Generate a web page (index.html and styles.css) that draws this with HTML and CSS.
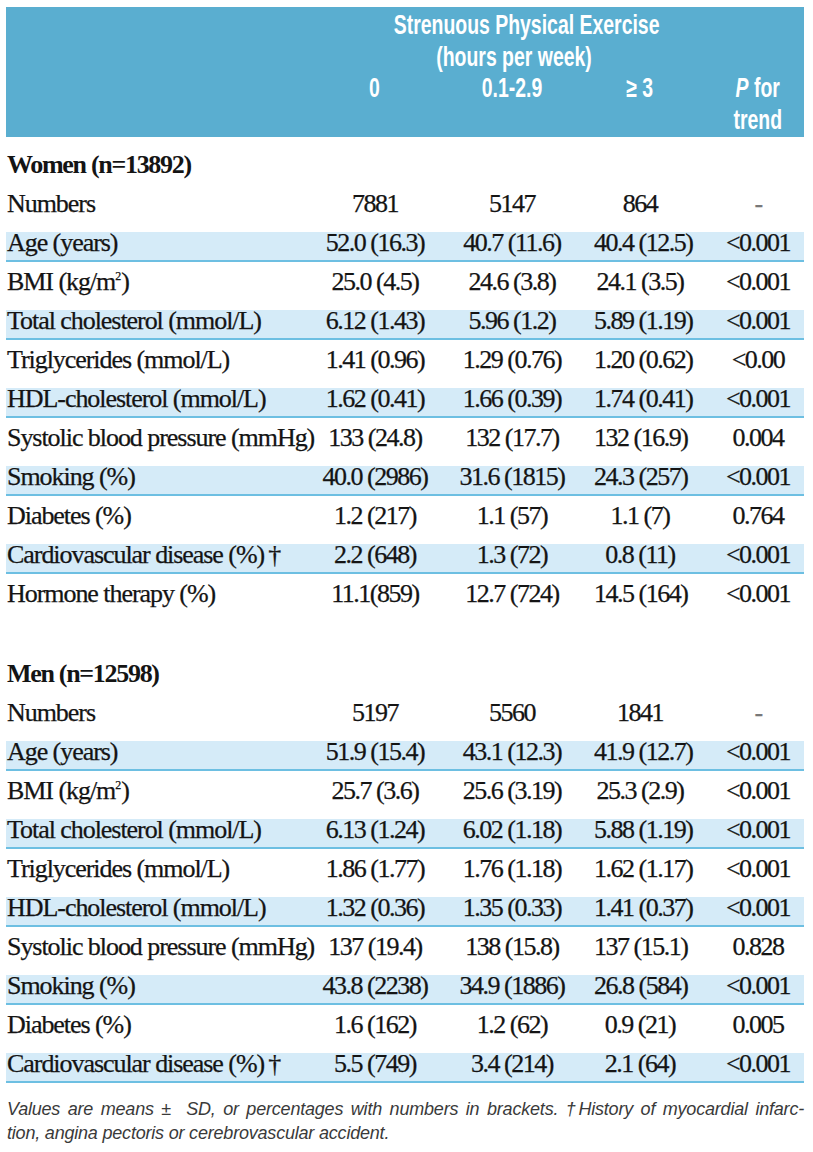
FILE: index.html
```html
<!DOCTYPE html>
<html lang="en">
<head>
<meta charset="utf-8">
<title>Strenuous Physical Exercise</title>
<link rel="stylesheet" href="styles.css">
</head>
<body>
<div class="page">
  <div class="head">
    <div class="cols hrow"><div class="span"><span class="sx">Strenuous Physical Exercise</span></div></div>
    <div class="cols hrow"><div class="span"><span class="sx">(hours per week)</span></div></div>
    <div class="cols hrow">
      <div></div>
      <div class="hc"><span class="sx">0</span></div>
      <div class="hc"><span class="sx">0.1-2.9</span></div>
      <div class="hc"><span class="sx">&ge; 3</span></div>
      <div class="hc last"><span class="sx"><i>P</i> for<br>trend</span></div>
    </div>
  </div>

  <div class="cols row group first"><div class="lbl">Women (n=13892)</div></div>
  <div class="cols row"><div class="lbl">Numbers</div><div class="v">7881</div><div class="v">5147</div><div class="v">864</div><div class="v last dash">-</div></div>
  <div class="cols row shade"><div class="lbl">Age (years)</div><div class="v">52.0 (16.3)</div><div class="v">40.7 (11.6)</div><div class="v">40.4 (12.5)</div><div class="v last">&lt;0.001</div></div>
  <div class="cols row"><div class="lbl">BMI (kg/m<sup class="sq">2</sup>)</div><div class="v">25.0 (4.5)</div><div class="v">24.6 (3.8)</div><div class="v">24.1 (3.5)</div><div class="v last">&lt;0.001</div></div>
  <div class="cols row shade"><div class="lbl">Total cholesterol (mmol/L)</div><div class="v">6.12 (1.43)</div><div class="v">5.96 (1.2)</div><div class="v">5.89 (1.19)</div><div class="v last">&lt;0.001</div></div>
  <div class="cols row"><div class="lbl">Triglycerides (mmol/L)</div><div class="v">1.41 (0.96)</div><div class="v">1.29 (0.76)</div><div class="v">1.20 (0.62)</div><div class="v last">&lt;0.00</div></div>
  <div class="cols row shade"><div class="lbl">HDL-cholesterol (mmol/L)</div><div class="v">1.62 (0.41)</div><div class="v">1.66 (0.39)</div><div class="v">1.74 (0.41)</div><div class="v last">&lt;0.001</div></div>
  <div class="cols row"><div class="lbl">Systolic blood pressure (mmHg)</div><div class="v">133 (24.8)</div><div class="v">132 (17.7)</div><div class="v">132 (16.9)</div><div class="v last">0.004</div></div>
  <div class="cols row shade"><div class="lbl">Smoking (%)</div><div class="v">40.0 (2986)</div><div class="v">31.6 (1815)</div><div class="v">24.3 (257)</div><div class="v last">&lt;0.001</div></div>
  <div class="cols row"><div class="lbl">Diabetes (%)</div><div class="v">1.2 (217)</div><div class="v">1.1 (57)</div><div class="v">1.1 (7)</div><div class="v last">0.764</div></div>
  <div class="cols row shade"><div class="lbl">Cardiovascular disease (%)&thinsp;&dagger;</div><div class="v">2.2 (648)</div><div class="v">1.3 (72)</div><div class="v">0.8 (11)</div><div class="v last">&lt;0.001</div></div>
  <div class="cols row"><div class="lbl">Hormone therapy (%)</div><div class="v">11.1(859)</div><div class="v">12.7 (724)</div><div class="v">14.5 (164)</div><div class="v last">&lt;0.001</div></div>

  <div class="cols row group section"><div class="lbl">Men (n=12598)</div></div>
  <div class="cols row"><div class="lbl">Numbers</div><div class="v">5197</div><div class="v">5560</div><div class="v">1841</div><div class="v last dash">-</div></div>
  <div class="cols row shade"><div class="lbl">Age (years)</div><div class="v">51.9 (15.4)</div><div class="v">43.1 (12.3)</div><div class="v">41.9 (12.7)</div><div class="v last">&lt;0.001</div></div>
  <div class="cols row"><div class="lbl">BMI (kg/m<sup class="sq">2</sup>)</div><div class="v">25.7 (3.6)</div><div class="v">25.6 (3.19)</div><div class="v">25.3 (2.9)</div><div class="v last">&lt;0.001</div></div>
  <div class="cols row shade"><div class="lbl">Total cholesterol (mmol/L)</div><div class="v">6.13 (1.24)</div><div class="v">6.02 (1.18)</div><div class="v">5.88 (1.19)</div><div class="v last">&lt;0.001</div></div>
  <div class="cols row"><div class="lbl">Triglycerides (mmol/L)</div><div class="v">1.86 (1.77)</div><div class="v">1.76 (1.18)</div><div class="v">1.62 (1.17)</div><div class="v last">&lt;0.001</div></div>
  <div class="cols row shade"><div class="lbl">HDL-cholesterol (mmol/L)</div><div class="v">1.32 (0.36)</div><div class="v">1.35 (0.33)</div><div class="v">1.41 (0.37)</div><div class="v last">&lt;0.001</div></div>
  <div class="cols row"><div class="lbl">Systolic blood pressure (mmHg)</div><div class="v">137 (19.4)</div><div class="v">138 (15.8)</div><div class="v">137 (15.1)</div><div class="v last">0.828</div></div>
  <div class="cols row shade"><div class="lbl">Smoking (%)</div><div class="v">43.8 (2238)</div><div class="v">34.9 (1886)</div><div class="v">26.8 (584)</div><div class="v last">&lt;0.001</div></div>
  <div class="cols row"><div class="lbl">Diabetes (%)</div><div class="v">1.6 (162)</div><div class="v">1.2 (62)</div><div class="v">0.9 (21)</div><div class="v last">0.005</div></div>
  <div class="cols row shade"><div class="lbl">Cardiovascular disease (%)&thinsp;&dagger;</div><div class="v">5.5 (749)</div><div class="v">3.4 (214)</div><div class="v">2.1 (64)</div><div class="v last">&lt;0.001</div></div>

  <div class="note">
    <span class="note-l1">Values are means &plusmn; &nbsp;SD, or percentages with numbers in brackets. &dagger;History of myocardial infarc-</span>
    <span class="note-l2">tion, angina pectoris or cerebrovascular accident.</span>
  </div>
</div>
</body>
</html>
```
FILE: styles.css
```css
html, body {
  margin: 0;
  padding: 0;
  background: #ffffff;
}

.page {
  padding: 7px 9px 0 6px;
  font-family: "Liberation Serif", "Times New Roman", serif;
  color: #141414;
}

.cols {
  display: grid;
  grid-template-columns: 314px 110px 164px 92px 118px;
}

/* ---------- header band ---------- */
.head {
  background: #5aaed0;
  color: #ffffff;
  padding-top: 3px;
  padding-bottom: 1px;
  font-family: "Liberation Sans", Arial, sans-serif;
  font-weight: bold;
  font-size: 27px;
  line-height: 31.5px;
}

.sx {
  display: inline-block;
  transform: scaleX(0.72);
  transform-origin: 50% 50%;
}

.hrow .span {
  grid-column: 2 / 5;
  text-align: center;
  padding-left: 22px;
  white-space: nowrap;
}

.hc {
  text-align: center;
  white-space: nowrap;
}

.last {
  padding-left: 26px;
}

/* ---------- body rows ---------- */
.row {
  margin-top: 9px;
  height: 30px;
  box-sizing: border-box;
  font-size: 26px;
  line-height: 22px;
  border-bottom: 2px solid transparent;
  -webkit-text-stroke: 0.25px currentColor;
}

.row.first {
  margin-top: 17px;
}

.row.shade {
  background: #d5ebf8;
  border-bottom-color: #6dbfe2;
}

.row.section {
  margin-top: 50px;
}

.lbl {
  padding-left: 1px;
  letter-spacing: -1.05px;
  white-space: nowrap;
}

.group .lbl {
  font-weight: bold;
  letter-spacing: -1.3px;
  -webkit-text-stroke: 0;
}

.v {
  text-align: center;
  letter-spacing: -1.5px;
  white-space: nowrap;
}

.dash {
  color: #777777;
}

.sq {
  font-size: 12px;
  line-height: 0;
  vertical-align: 10px;
  letter-spacing: 0;
}

/* ---------- footnote ---------- */
.note {
  margin-top: 14px;
  padding-left: 1px;
  font-family: "Liberation Sans", Arial, sans-serif;
  font-style: italic;
  font-size: 18px;
  line-height: 24px;
  color: #3a3a3a;
  letter-spacing: -0.2px;
}

.note-l1 {
  display: block;
  white-space: nowrap;
  text-align: justify;
  text-align-last: justify;
}

.note-l2 {
  display: block;
}
```
